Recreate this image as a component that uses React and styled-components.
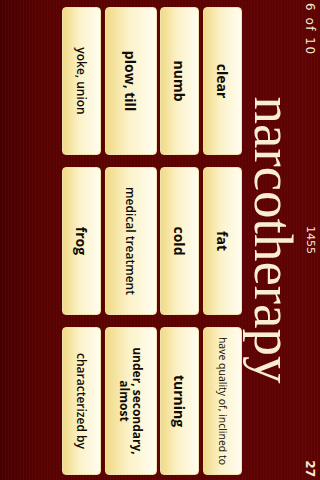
import styled, { createGlobalStyle } from "styled-components";

const GlobalStyle = createGlobalStyle`
  html, body {
    margin: 0;
    padding: 0;
    background: #520000;
    overflow: hidden;
  }
`;

const Screen = styled.div`
  width: 320px;
  height: 480px;
  overflow: hidden;
`;

/* the game is drawn in landscape and turned onto the portrait screen */
const Landscape = styled.div`
  width: 480px;
  height: 320px;
  transform-origin: 0 0;
  transform: translateX(320px) rotate(90deg);
  background:
    repeating-linear-gradient(
      180deg,
      rgba(0, 0, 0, 0) 0px,
      rgba(0, 0, 0, 0) 2px,
      rgba(110, 16, 16, 0.3) 2px,
      rgba(110, 16, 16, 0.3) 3px
    ),
    linear-gradient(180deg, #5e0303 0%, #580202 85%, #460000 100%);
  display: flex;
  flex-direction: column;
`;

const StatusBar = styled.div`
  display: grid;
  grid-template-columns: 1fr auto 1fr;
  align-items: center;
  height: 19px;
  padding: 0 3px;
  color: #f6ecd2;
  font-family: "DejaVu Sans", sans-serif;
`;

const Progress = styled.span`
  font-size: 12px;
  letter-spacing: 1.5px;
`;

const Score = styled.span`
  font-size: 11px;
`;

const Timer = styled.span`
  font-size: 12px;
  font-weight: bold;
  text-align: right;
`;

const Word = styled.h1`
  margin: 0;
  text-align: center;
  font-family: "Liberation Serif", serif;
  font-weight: normal;
  font-size: 55px;
  line-height: 55px;
  color: #f8eed3;
`;

const Choices = styled.div`
  display: grid;
  grid-template-columns: repeat(3, 148px);
  column-gap: 12px;
  row-gap: 3.5px;
  padding: 4px 5px 0 7px;
`;

const Card = styled.div`
  box-sizing: border-box;
  min-height: 39px;
  padding: 12px 6px;
  display: flex;
  align-items: center;
  justify-content: center;
  text-align: center;
  border-radius: 4px;
  border: 1px solid #efe2ad;
  background: linear-gradient(180deg, #fffdf0 0%, #fbf2c9 55%, #f0da86 100%);
  color: #120c04;
  font-family: "Open Sans", "DejaVu Sans", sans-serif;
  font-size: ${(p) => p.$size || 14}px;
  font-weight: ${(p) => p.$weight || 700};
  line-height: 13px;
`;

const choices = [
  { text: "clear" },
  { text: "fat" },
  { text: "have quality of, inclined to", size: 10.5, weight: 500 },
  { text: "numb" },
  { text: "cold" },
  { text: "turning" },
  { text: "plow, till" },
  { text: "medical treatment", size: 12, weight: 600 },
  { text: "under, secondary, almost", size: 12 },
  { text: "yoke, union", size: 12, weight: 600 },
  { text: "frog" },
  { text: "characterized by", size: 12, weight: 600 },
];

export default function App() {
  return (
    <Screen>
      <GlobalStyle />
      <Landscape>
        <StatusBar>
          <Progress>6 of 10</Progress>
          <Score>1455</Score>
          <Timer>27</Timer>
        </StatusBar>
        <Word>narcotherapy</Word>
        <Choices>
          {choices.map((c) => (
            <Card key={c.text} $size={c.size} $weight={c.weight}>
              {c.text}
            </Card>
          ))}
        </Choices>
      </Landscape>
    </Screen>
  );
}
